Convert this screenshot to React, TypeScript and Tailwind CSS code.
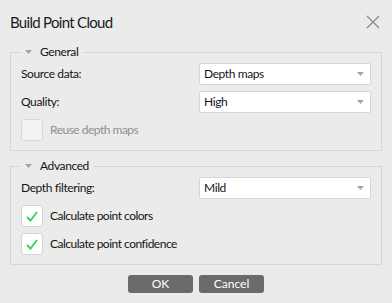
import React from 'react';

const font = { fontFamily: 'Lato, "Noto Sans", sans-serif' };

function Caret() {
  return (
    <svg width="7" height="4" viewBox="0 0 7 4" className="shrink-0">
      <path d="M0 0 L7 0 L3.5 4 Z" fill="#a3a3a3" />
    </svg>
  );
}

function Select({ value }: { value: string }) {
  return (
    <div className="flex items-center justify-between w-[172px] h-[22px] bg-white border border-[#d6d6d6] rounded-[2px] pl-[4px] pr-[6px] text-[12px] tracking-[-0.4px] text-[#141428]">
      <span>{value}</span>
      <Caret />
    </div>
  );
}

function Check({ checked, label, disabled }: { checked?: boolean; label: string; disabled?: boolean }) {
  return (
    <div className="flex items-center gap-[7px] h-[22px]">
      <div
        className={
          disabled
            ? 'w-[22px] h-[22px] rounded-[3px] border border-[#d9d9d9] bg-[#f2f2f2]'
            : 'w-[22px] h-[22px] rounded-[3px] border border-[#d4d4d4] bg-white flex items-center justify-center'
        }
      >
        {checked && (
          <svg width="12" height="11" viewBox="0 0 12 11">
            <path d="M1 6 L4.5 9.5 L11 1" fill="none" stroke="#3ccd69" strokeWidth="1.9" />
          </svg>
        )}
      </div>
      <span className={disabled ? 'text-[12px] tracking-[-0.5px] text-[#8f8f8f]' : 'text-[12px] tracking-[-0.5px] text-[#141414]'}>{label}</span>
    </div>
  );
}

function Row({ label, value }: { label: string; value: string }) {
  return (
    <div className="flex items-center justify-between h-[22px]">
      <span className="text-[12px] tracking-[-0.4px] text-[#141414]">{label}</span>
      <Select value={value} />
    </div>
  );
}

function Group({ title, children }: { title: string; children: React.ReactNode }) {
  return (
    <fieldset className="border border-[#d6d6d6] px-[10px] pt-[3px] pb-[9px]">
      <legend className="flex items-center h-[16px] pl-[4px] pr-[5px]">
        <Caret />
        <span className="ml-[8px] text-[12px] tracking-[-0.4px] text-[#141414]">{title}</span>
      </legend>
      <div className="flex flex-col gap-[6px]">{children}</div>
    </fieldset>
  );
}

export default function App() {
  return (
    <div className="w-[392px] h-[303px] bg-[#ebebeb] overflow-hidden" style={font}>
      <div className="flex items-center justify-between h-[44px] pl-[10px] pr-[12px]">
        <span className="text-[15px] tracking-[-0.7px] text-[#1a1a1a]">Build Point Cloud</span>
        <svg width="14" height="14" viewBox="0 0 14 14">
          <path d="M1 1 L13 13 M13 1 L1 13" stroke="#8c8c8c" strokeWidth="1.4" />
        </svg>
      </div>
      <div className="flex flex-col gap-[7px] px-[10px]">
        <Group title="General">
          <Row label="Source data:" value="Depth maps" />
          <Row label="Quality:" value="High" />
          <Check label="Reuse depth maps" disabled />
        </Group>
        <Group title="Advanced">
          <Row label="Depth filtering:" value="Mild" />
          <Check label="Calculate point colors" checked />
          <Check label="Calculate point confidence" checked />
        </Group>
      </div>
      <div className="flex justify-center gap-[6px] mt-[10px]">
        <button className="w-[65px] h-[18px] rounded-[3px] bg-[#6b6b6b] text-white text-[12px] leading-none">OK</button>
        <button className="w-[65px] h-[18px] rounded-[3px] bg-[#6b6b6b] text-white text-[12px] leading-none">Cancel</button>
      </div>
    </div>
  );
}
